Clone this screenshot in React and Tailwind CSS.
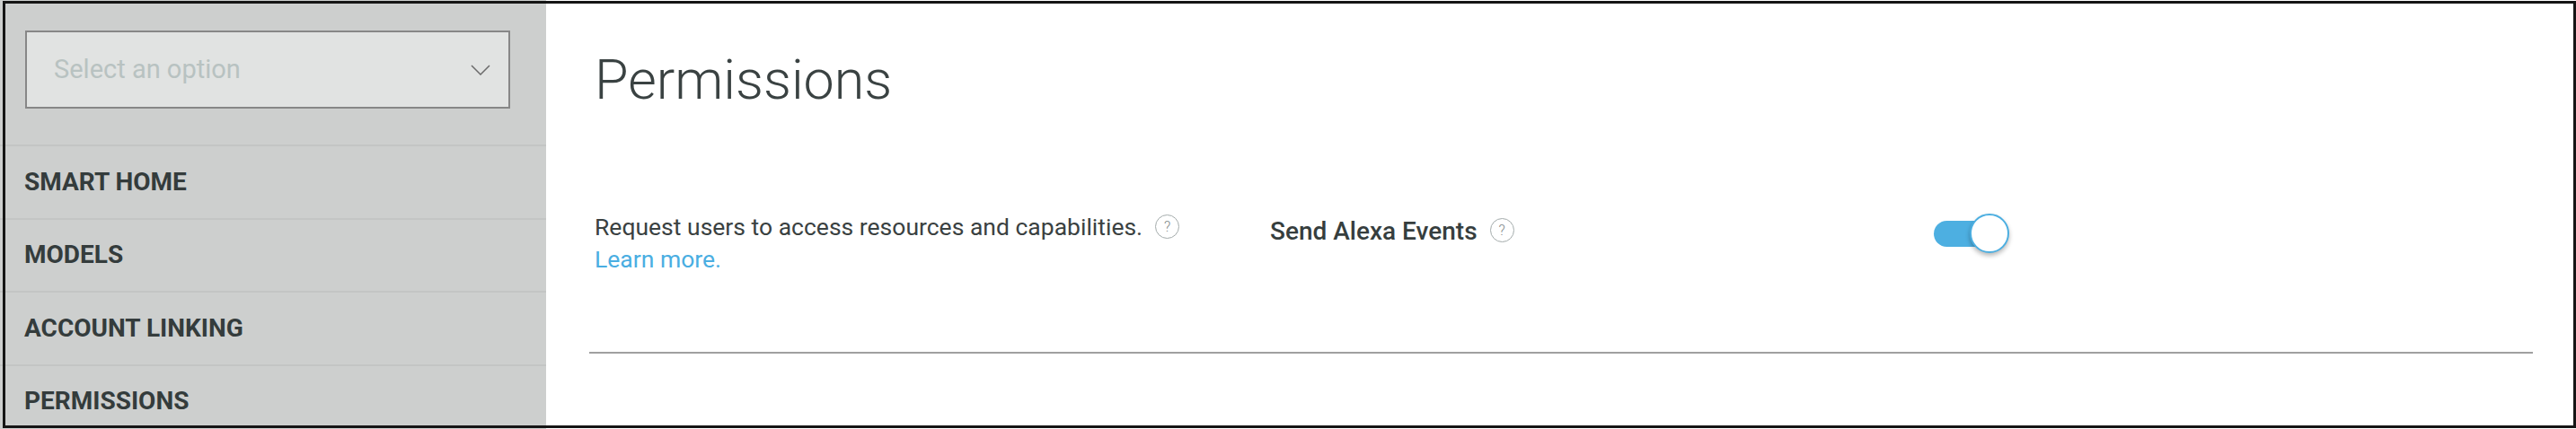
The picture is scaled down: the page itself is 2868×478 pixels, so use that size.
import React from "react";

const navItems = ["SMART HOME", "MODELS", "ACCOUNT LINKING", "PERMISSIONS"];

const HelpIcon = ({ className = "" }) => (
  <span
    className={`inline-flex h-[27px] w-[27px] items-center justify-center rounded-full border-[1.5px] border-[#a3abab] text-[16px] font-light leading-none text-[#7f8989] ${className}`}
  >
    ?
  </span>
);

const Toggle = () => (
  <div className="relative h-[44px] w-[84px]">
    {/* track */}
    <div className="absolute left-0 top-[8px] h-[29px] w-[70px] rounded-full bg-[#4dafe1]"></div>
    {/* knob */}
    <div className="absolute left-[40px] top-0 h-[44px] w-[44px] rounded-full border-2 border-[#4dafe1] bg-white shadow-[0_3px_5px_rgba(0,0,0,0.28)]"></div>
  </div>
);

export default function App() {
  return (
    <div className="relative flex h-[478px] w-[2868px] overflow-hidden bg-white font-['Roboto',sans-serif] text-[#363e3e]">
      {/* Sidebar */}
      <aside className="w-[608px] shrink-0 bg-[#cdcfce]">
        <div className="pb-[40px] pl-[28px] pt-[34px]">
          <div className="flex h-[87px] w-[540px] items-center justify-between border-2 border-[#878787] bg-[#e1e3e2] pl-[30px] pr-[20px]">
            <span className="text-[29px] text-[#b8c2c1]">Select an option</span>
            <svg width="22" height="12" viewBox="0 0 22 12" fill="none">
              <polyline points="1,1 11,11 21,1" stroke="#6b6b6b" strokeWidth="1.5" />
            </svg>
          </div>
        </div>
        {navItems.map((item) => (
          <div
            key={item}
            className="flex h-[81.5px] items-center border-t-2 border-[#c3c5c4] pl-[27px] text-[28px] font-bold text-[#343c3c]"
          >
            {item}
          </div>
        ))}
      </aside>

      {/* Main content */}
      <main className="flex-1 px-[48px]">
        <h1 className="pl-[6px] pt-[59px] text-[61px] font-light leading-none text-[#3a4242]">Permissions</h1>

        <div className="mt-[115px] flex pl-[6px]">
          <div className="w-[752px] shrink-0 text-[26.5px] leading-[36px] text-[#3a4141]">
            Request users to access resources and capabilities.
            <HelpIcon className="ml-[14px] mt-[4px] align-top" />
            <br />
            <a className="text-[#4aaee2]">Learn more.</a>
          </div>

          <div className="mt-[5px] flex w-[739px] shrink-0 items-start">
            <span className="text-[28px] font-medium leading-[36px]">Send Alexa Events</span>
            <HelpIcon className="ml-[14px] mt-[3px]" />
          </div>

          <div className="mt-[3px]">
            <Toggle />
          </div>
        </div>

        <div className="mt-[85px] h-[2px] bg-[#a0a0a0]"></div>
      </main>

      {/* screenshot frame */}
      <div className="pointer-events-none absolute bottom-[1px] left-[3px] right-0 top-[1px] border-[3px] border-[#151515]"></div>
    </div>
  );
}
